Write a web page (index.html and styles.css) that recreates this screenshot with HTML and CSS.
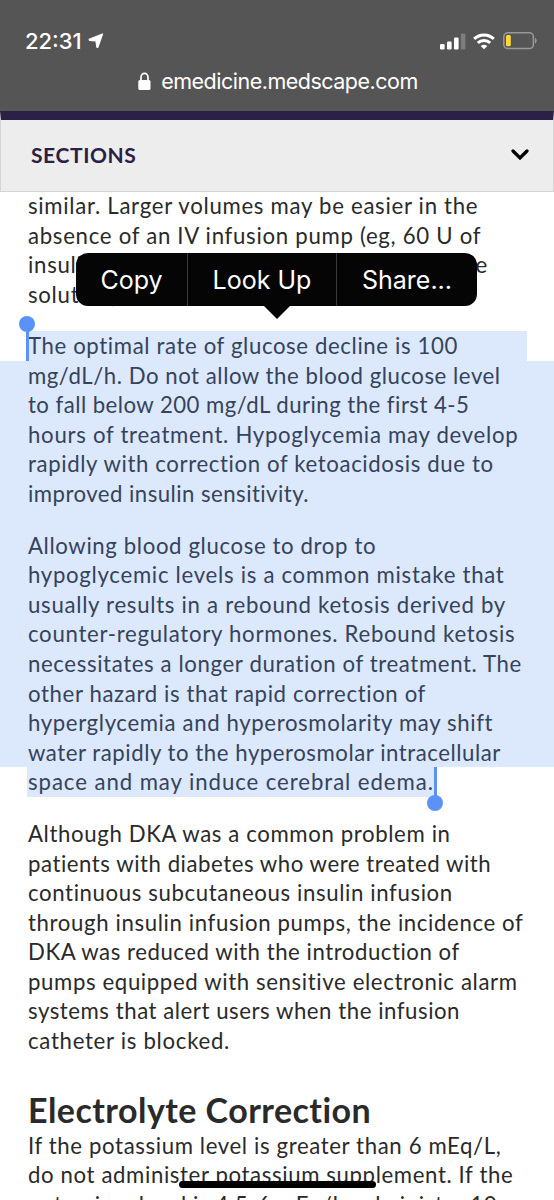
FILE: index.html
```html
<!DOCTYPE html>
<html lang="en">
<head>
    <meta charset="UTF-8">
    <meta name="viewport" content="width=device-width, initial-scale=1.0">
    <title>Diabetic Ketoacidosis Treatment</title>
    <link rel="stylesheet" href="styles.css">
</head>
<body>
<div class="phone">

    <header class="browser">
        <div class="status">
            <span class="time">22:31</span>
            <svg class="location" width="16" height="16" viewBox="0 0 16 16"><path d="M14.500 1 1.200 6.300 1.500 7.300 8 7.800 8.900 14.200 9.800 14.300z" fill="#fff" stroke="#fff" stroke-width="1.300" stroke-linejoin="round"/></svg>
            <svg class="signal" width="26" height="17" viewBox="0 0 26 17">
                <rect x="0" y="11" width="4.600" height="5.500" rx="1.200" fill="#fff"/>
                <rect x="7" y="8.500" width="4.600" height="8" rx="1.200" fill="#fff"/>
                <rect x="14" y="4.500" width="4.600" height="12" rx="1.200" fill="#fff"/>
                <rect x="20.800" y=".5" width="4.600" height="16" rx="1.200" fill="#7d7d7d"/>
            </svg>
            <svg class="wifi" width="22" height="17" viewBox="0 0 22 17">
                <path d="M1.200 5.900a14 14 0 0 1 19.600 0M4.800 9.900a9 9 0 0 1 12.400 0" fill="none" stroke="#fff" stroke-width="3"/>
                <path d="M11 16.300 7.700 13.100a5 5 0 0 1 6.600 0z" fill="#fff"/>
            </svg>
            <svg class="battery" width="35" height="18" viewBox="0 0 35 18">
                <rect x=".8" y=".8" width="29.600" height="15.800" rx="4.200" fill="none" stroke="#999" stroke-width="1.500"/>
                <rect x="3" y="3" width="4.800" height="11.300" rx="1.500" fill="#fdd835"/>
                <path d="M32 6v5.400c2.200-.8 2.200-4.600 0-5.400z" fill="#999"/>
            </svg>
        </div>
        <div class="address">
            <svg width="13" height="19" viewBox="0 0 13 19">
                <path d="M3 9V5.300a3.500 3.900 0 0 1 7 0V9" fill="none" stroke="#fff" stroke-width="1.700"/>
                <rect x=".3" y="8" width="12.200" height="10" rx="1.500" fill="#fff"/>
            </svg>
            <span>emedicine.medscape.com</span>
        </div>
    </header>

    <div class="sections">
        <span>SECTIONS</span>
        <svg width="18" height="12" viewBox="0 0 18 12"><path d="M2 2l7 7 7-7" fill="none" stroke="#000" stroke-width="3.200" stroke-linecap="round"/></svg>
    </div>

    <main class="article">
        <p class="first wide">similar. Larger volumes may be easier in the<br>absence of an IV infusion pump (eg, 60 U of<br><span class="fill">insulin in 500 mL isotonic sodium chloride</span>solution)</p>

        <div class="selection">
            <p><span class="sel-start">The optimal rate of glucose decline is 100<i class="handle handle-start"></i></span><span class="sel"><span class="tight">mg/dL/h. Do not allow the blood glucose level</span><br><span class="tighter">to fall below 200 mg/dL during the first 4-5</span><br><span class="wide">hours of treatment. Hypoglycemia may develop</span><br>rapidly with correction of ketoacidosis due to<br><span class="tighter">improved insulin sensitivity.</span></span></p>
            <p class="sel sel-gap">Allowing blood glucose to drop to<br><span class="wide">hypoglycemic levels is a common mistake that<br>usually results in a rebound ketosis derived by<br>counter-regulatory hormones. Rebound ketosis</span><br>necessitates a longer duration of treatment. The<br>other hazard is that rapid correction of<br>hyperglycemia and hyperosmolarity may shift<br><span class="tight">water rapidly to the hyperosmolar intracellular</span></p>
            <p><span class="sel-end">space and may induce cerebral edema.<i class="handle handle-end"></i></span></p>
        </div>

        <p class="after">Although DKA was a common problem in<br><span class="tight">patients with diabetes who were treated with</span><br>continuous subcutaneous insulin infusion<br>through insulin infusion pumps, the incidence of<br><span class="tight">DKA was reduced with the introduction of</span><br>pumps equipped with sensitive electronic alarm<br><span class="tight">systems that alert users when the infusion</span><br><span class="wide">catheter is blocked.</span></p>

        <h2>Electrolyte Correction</h2>
        <p>If the potassium level is greater than 6 mEq/L,<br>do not administer potassium supplement. If the<br>potassium level is 4.5-6 mEq/L, administer 10</p>
    </main>

    <div class="menu">
        <span class="copy">Copy</span>
        <span class="lookup">Look Up</span>
        <span class="share">Share...</span>
    </div>

    <div class="home-bar"></div>
</div>
</body>
</html>
```
FILE: styles.css
```css
body {
    margin: 0;
    background-color: #fff;
    color: #2a2a2a;
    font-family: Lato, sans-serif;
}

.phone {
    position: relative;
    width: 554px;
    height: 1200px;
    overflow: hidden;
}

svg {
    display: block;
    flex: none;
}

/* Safari bar */
.browser {
    height: 111px;
    background-color: #555;
    color: #fff;
    font-family: Inter, sans-serif;
}

.status {
    display: flex;
    height: 56px;
    padding: 26px 16px 0 25px;
    box-sizing: border-box;
    align-items: center;
}

.time {
    width: 57px;
    font-size: 22px;
    font-weight: 500;
    margin-right: 6px;
}

.signal {
    margin-left: auto;
    margin-right: 7px;
}

.wifi {
    margin-right: 8px;
}

.address {
    display: flex;
    justify-content: center;
    align-items: center;
    gap: 10px;
    height: 50px;
    padding-left: 2px;
    font-size: 21.5px;
    letter-spacing: -0.5px;
}

.sections {
    display: flex;
    justify-content: space-between;
    align-items: center;
    height: 81px;
    padding: 0 24px 2px 30px;
    box-sizing: border-box;
    background-color: #ededed;
    border: 1px solid #d5d5d5;
    border-top: 9px solid #2b2046;
    color: #2b2046;
    font-size: 21px;
    font-weight: bold;
    letter-spacing: 0.6px;
}

/* Article */
.article {
    font-size: 22.2px;
    line-height: 29.6px;
    letter-spacing: 0.62px;
    white-space: nowrap;
}

.wide {
    letter-spacing: 0.71px;
}

.tight {
    letter-spacing: 0.54px;
}

.tighter {
    letter-spacing: 0.46px;
}

p {
    margin: 0;
    padding: 0 28px;
}

.first {
    height: 140px;
    margin-top: -1px;
}

.fill {
    display: block;
    width: 460px;
    text-align-last: justify;
}

.selection {
    color: #35435c;
}

.selection p {
    padding: 0;
}

.sel-start {
    display: block;
    position: relative;
    margin: 0 27px;
    padding-left: 1px;
    background-color: #dce8fb;
}

.sel,
.selection .sel-gap {
    display: block;
    padding: 0 28px;
    background-color: #dce8fb;
}

.selection .sel-gap {
    padding-top: 22px;
}

.sel-end {
    display: inline-block;
    position: relative;
    width: 407px;
    margin-left: 27px;
    padding-left: 1px;
    background-color: #dce8fb;
    letter-spacing: 0.93px;
}

.handle {
    position: absolute;
    width: 3px;
    height: 30px;
    background-color: #5a92f7;
}

.handle::after {
    content: "";
    position: absolute;
    left: -6.5px;
    width: 16px;
    height: 16px;
    border-radius: 50%;
    background-color: #5a92f7;
}

.handle-start {
    top: 0;
    left: -1.5px;
}

.handle-start::after {
    top: -15px;
}

.handle-end {
    top: 0;
    right: -1.5px;
}

.handle-end::after {
    bottom: -14px;
}

.after {
    padding-top: 22px;
}

h2 {
    margin: 33px 0 0;
    padding: 0 28px;
    font-size: 34px;
    line-height: 42px;
    letter-spacing: 0.45px;
}

/* Text selection menu */
.menu {
    position: absolute;
    top: 253px;
    left: 76px;
    display: flex;
    width: 401px;
    height: 53px;
    border-radius: 12px;
    background-color: #050505;
    color: #fff;
    font-family: Inter, sans-serif;
    font-size: 25px;
    line-height: 55px;
    text-align: center;
}

.menu::after {
    content: "";
    position: absolute;
    top: 52px;
    left: 187px;
    border: 14px solid transparent;
    border-top-color: #050505;
    border-bottom: 0;
}

.copy {
    width: 111px;
    border-right: 1px solid #3a3a3a;
}

.lookup {
    width: 148px;
    border-right: 1px solid #3a3a3a;
}

.share {
    flex: 1;
}

.home-bar {
    position: absolute;
    top: 1181px;
    left: 179px;
    width: 197px;
    height: 7px;
    border-radius: 4px;
    background-color: #000;
}
```
